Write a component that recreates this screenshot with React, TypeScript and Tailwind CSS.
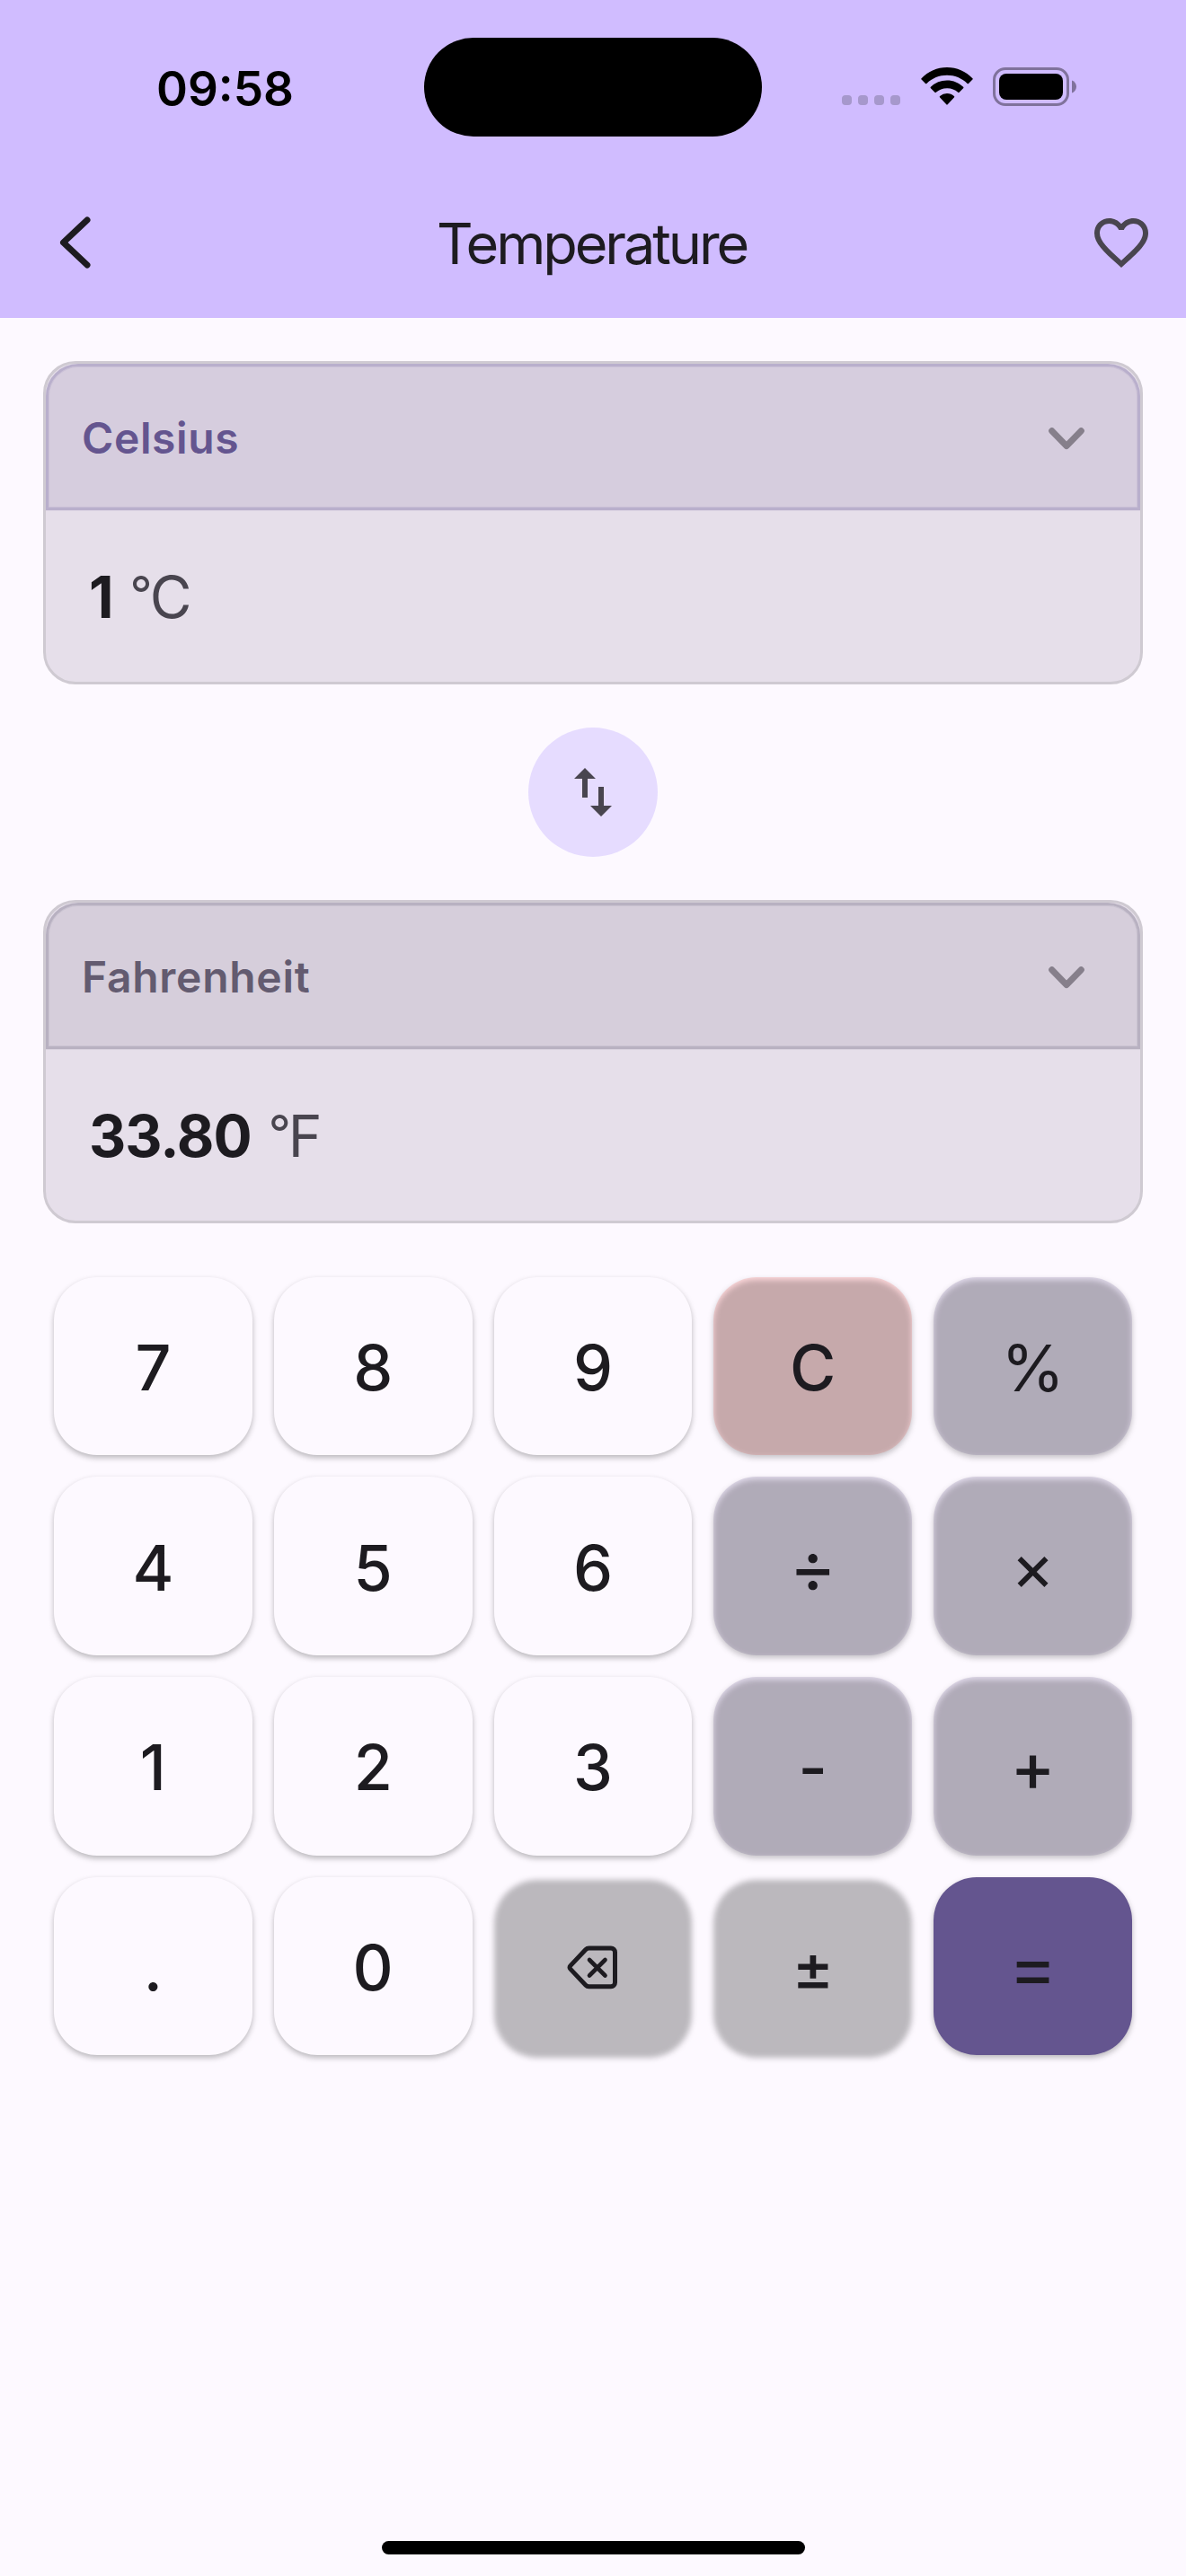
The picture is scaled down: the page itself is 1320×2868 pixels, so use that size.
import React from "react";
import { MdFavoriteBorder, MdImportExport } from "react-icons/md";

type Kind = "digit" | "operator" | "clear" | "utility" | "equals";

const plain = "pt-[4px] text-[70px] font-medium";

const keys: { label: string; kind: Kind; text?: string }[] = [
  { label: "7", kind: "digit" },
  { label: "8", kind: "digit" },
  { label: "9", kind: "digit" },
  { label: "C", kind: "clear" },
  { label: "%", kind: "operator", text: "pt-[4px] text-[72px] font-normal" },
  { label: "4", kind: "digit" },
  { label: "5", kind: "digit" },
  { label: "6", kind: "digit" },
  { label: "÷", kind: "operator", text: "pt-[1px] text-[80px] font-normal" },
  { label: "×", kind: "operator", text: "pt-[1px] text-[74px] font-normal" },
  { label: "1", kind: "digit" },
  { label: "2", kind: "digit" },
  { label: "3", kind: "digit" },
  { label: "-", kind: "operator", text: "pt-[3px] text-[70px] font-medium" },
  { label: "+", kind: "operator", text: "pt-[1px] text-[75px] font-medium" },
  { label: ".", kind: "digit" },
  { label: "0", kind: "digit" },
  { label: "backspace", kind: "utility", text: "pt-[2px]" },
  { label: "±", kind: "utility", text: "pt-[3px] text-[70px] font-medium" },
  { label: "=", kind: "equals", text: "pt-[1px] text-[81px] font-normal" },
];

const fills: Record<Kind, string> = {
  digit: "bg-[#fdf9ff] shadow-[0_3px_6px_rgba(0,0,0,0.27)]",
  equals: "bg-[#64558f] shadow-[0_3px_6px_rgba(0,0,0,0.27)]",
  operator: "bg-[#e2dbec]",
  clear: "bg-[#fed9dc]",
  utility: "bg-[#fdf9ff]",
};

function StatusBar() {
  return (
    <div className="flex h-[194px] items-start">
      <div className="flex h-full w-[472px] pl-[174px] pt-[66px]">
        <span className="text-[53px] font-semibold leading-[66px] text-black">09:58</span>
      </div>
      <div className="mt-[42px] h-[110px] w-[376px] rounded-full bg-black" />
      <div className="flex items-start pl-[89px] pt-[75px]">
        <div className="mt-[31px] flex gap-[7px]">
          {[0, 1, 2, 3].map((i) => (
            <span key={i} className="size-[11px] rounded-[4px] bg-[#a698cc]" />
          ))}
        </div>
        <svg className="ml-[23px]" width="58" height="42" viewBox="0 0 58 42" fill="#000">
          <path d="M29 0C40 0 50 4.5 57.4 12.2a1 1 0 0 1 0 1.4L53 18a1 1 0 0 1-1.400 0C45.500 12 37.500 8.800 29 8.800S12.500 12 6.400 18a1 1 0 0 1-1.400 0L.6 13.600a1 1 0 0 1 0-1.400C8 4.500 18 0 29 0z" />
          <path d="M29 14.500c7 0 13.300 2.700 18.100 7.300a1 1 0 0 1 0 1.500l-4.500 4.500a1 1 0 0 1-1.400 0A17.600 17.600 0 0 0 29 23.200c-4.700 0-9 1.700-12.200 4.600a1 1 0 0 1-1.400 0l-4.500-4.500a1 1 0 0 1 0-1.500A26 26 0 0 1 29 14.500z" />
          <path d="M29 29c3 0 5.800 1.100 7.900 3a1 1 0 0 1 0 1.500l-7.200 7.800a1 1 0 0 1-1.400 0l-7.200-7.800a1 1 0 0 1 0-1.500A12 12 0 0 1 29 29z" />
        </svg>
        <svg className="ml-[22px]" width="94" height="43" viewBox="0 0 94 43">
          <rect x="1.500" y="1.500" width="82" height="40" rx="12.500" fill="none" stroke="#80729c" strokeWidth="3" />
          <rect x="7" y="7" width="71" height="29" rx="8" fill="#000" />
          <path d="M88 14.500c3 1 5 3.700 5 7s-2 6-5 7z" fill="#80729c" />
        </svg>
      </div>
    </div>
  );
}

function TitleBar() {
  return (
    <div className="flex h-[160px] items-start justify-between pl-[66px] pr-[36px]">
      <svg className="mt-[46px]" width="36" height="60" viewBox="0 0 36 60" fill="none">
        <path d="M31 5 4.500 30 31 55" stroke="#1d1b20" strokeWidth="7" strokeLinecap="round" strokeLinejoin="round" />
      </svg>
      <h1 className="ml-[3px] mt-[37px] text-[63px] font-normal leading-[80px] tracking-[-3.100px] text-[#1d1b20]">
        Temperature
      </h1>
      <MdFavoriteBorder className="mt-[40px] text-[#49454f]" size={72} />
    </div>
  );
}

interface UnitCardProps {
  unit: string;
  value: string;
  symbol: string;
  active?: boolean;
}

function UnitCard({ unit, value, symbol, active }: UnitCardProps) {
  return (
    <section className="h-[360px] rounded-[36px] border-[3px] border-[#cfcad2] bg-[#e6dfea]">
      <div
        className={
          active
            ? "flex h-[163px] items-center justify-between rounded-t-[36px] border-[3px] border-[#b9afcc] bg-[#d6cdde] pl-[37px] pr-[59px] pt-[3px] shadow-[inset_0_0_0_1px_#cbc1d7,0_1px_0_#dbd3e2]"
            : "flex h-[163px] items-center justify-between rounded-t-[36px] border-[3px] border-[#b8b1c1] bg-[#d6cedb] pl-[37px] pr-[59px] pt-[3px] shadow-[inset_0_0_0_1px_#cac3d1,0_1px_0_#dbd4e0]"
        }
      >
        <span
          className={
            active
              ? "text-[48px] font-semibold leading-[60px] tracking-[0.600px] text-[#64558f]"
              : "text-[48px] font-semibold leading-[60px] tracking-[0.700px] text-[#635b70]"
          }
        >
          {unit}
        </span>
        <svg width="40" height="25" viewBox="0 0 40 25" fill="none">
          <path d="M3.700 3.700 20 20.500 36.300 3.700" stroke="#867f8b" strokeWidth="7" strokeLinecap="round" strokeLinejoin="round" />
        </svg>
      </div>
      <div className="flex items-baseline gap-[19px] pl-[48px] pt-[57px] leading-[80px]">
        <span className="text-[64px] font-bold tracking-[-1px] text-[#1d1b20]">{value}</span>
        <span className="text-[64px] font-normal text-[#49454f]">
          <span className="relative -top-[7px] text-[55px] leading-none tracking-[-3px]">{symbol[0]}</span>
          {symbol.slice(1)}
        </span>
      </div>
    </section>
  );
}

function BackspaceIcon() {
  return (
    <svg width="57" height="49" viewBox="0 0 57 49" fill="none" stroke="#1d1b20" strokeLinecap="round" strokeLinejoin="round">
      <path
        d="M24.500 3H49a4.500 4.500 0 0 1 4.500 4.500v33.800a4.500 4.500 0 0 1-4.500 4.500H24.500a5 5 0 0 1-3.600-1.500L4 26.400a3 3 0 0 1 0-4L20.900 4.500A5 5 0 0 1 24.500 3z"
        strokeWidth="5"
      />
      <path d="M25 16 42.500 33.500M42.500 16 25 33.500" strokeWidth="4.600" />
    </svg>
  );
}

function Key({ label, kind, text = plain }: { label: string; kind: Kind; text?: string }) {
  const translucent = kind === "operator" || kind === "clear" || kind === "utility";
  return (
    <button className={`relative flex h-[198.700px] items-center justify-center rounded-[48px] ${fills[kind]}`}>
      {translucent && (
        <span
          className={
            kind === "utility"
              ? "absolute inset-0 translate-y-[3px] rounded-[48px] bg-black/26 blur-[3px]"
              : "absolute inset-0 translate-y-[3px] rounded-[48px] bg-black/22 blur-[3px]"
          }
        />
      )}
      <span className={`relative leading-[88px] text-[#1d1b20] ${text}`}>
        {label === "backspace" ? <BackspaceIcon /> : label}
      </span>
    </button>
  );
}

export default function App() {
  return (
    <div className="flex h-[2868px] w-[1320px] flex-col bg-[#fdf9ff] font-['Inter',sans-serif]">
      <header className="h-[354px] bg-[#d0bcff]">
        <StatusBar />
        <TitleBar />
      </header>
      <main className="flex flex-1 flex-col px-[48px] pt-[48px]">
        <UnitCard unit="Celsius" value="1" symbol="°C" active />
        <button className="my-[48px] flex size-[144px] items-center justify-center self-center rounded-full bg-[#e6dcff]">
          <MdImportExport className="text-[#49454f]" size={72} />
        </button>
        <UnitCard unit="Fahrenheit" value="33.80" symbol="°F" />
        <div className="mx-[12px] mt-[59.600px] grid grid-cols-5 gap-[24px]">
          {keys.map((k) => (
            <Key key={k.label} label={k.label} kind={k.kind} text={k.text} />
          ))}
        </div>
      </main>
      <footer className="flex h-[39px] justify-center">
        <div className="h-[15px] w-[471px] rounded-full bg-black" />
      </footer>
    </div>
  );
}
